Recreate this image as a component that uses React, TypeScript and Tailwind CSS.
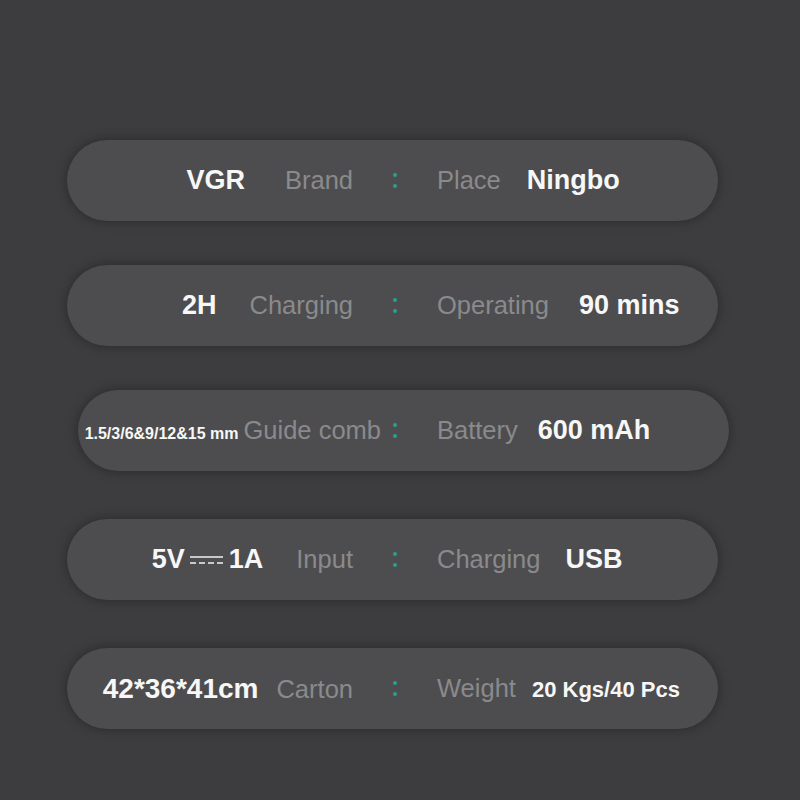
import React from 'react';

// 规格表：每行一个胶囊，左值+左标签 · 冒号 · 右标签+右值

function DcSymbol() {
  return (
    <svg width="34" height="12" viewBox="0 0 34 12" className="mx-[5px] self-center">
      <line x1="0" y1="3" x2="33" y2="3" stroke="#f2f2f2" strokeWidth="1.6" />
      <line x1="0" y1="9" x2="33" y2="9" stroke="#f2f2f2" strokeWidth="1.4" strokeDasharray="6 3" />
    </svg>
  );
}

function Colon({ className }: { className: string }) {
  return (
    <div className={`flex h-full items-center ${className}`}>
      <div className="flex flex-col gap-[7px]">
        <span className="block h-[4px] w-[4px] rounded-full bg-[#2a9f8e]" />
        <span className="block h-[4px] w-[4px] rounded-full bg-[#2a9f8e]" />
      </div>
    </div>
  );
}

const pill =
  'flex h-[81px] w-[651px] items-center rounded-full bg-[#4d4d4f] shadow-[0_0_12px_rgba(0,0,0,0.35)]';
const value = 'font-bold text-[27px] leading-none text-[#f7f7f7]';
const label = 'text-[25.5px] leading-none text-[#8a8a8c]';

export default function App() {
  return (
    <div
      className="flex h-[800px] w-[800px] flex-col bg-[#3d3d3f]"
      style={{ fontFamily: '"Liberation Sans", Arial, sans-serif' }}
    >
      {/* VGR / Ningbo */}
      <div className={`${pill} ml-[67px] mt-[140px]`}>
        <div className="flex w-[286px] items-baseline justify-end gap-[40px]">
          <span className={value}>VGR</span>
          <span className={label}>Brand</span>
        </div>
        <Colon className="w-[84px] pl-[40px]" />
        <div className="flex items-baseline gap-[26px]">
          <span className={label}>Place</span>
          <span className={value}>Ningbo</span>
        </div>
      </div>

      {/* 充电 / 运行 */}
      <div className={`${pill} ml-[67px] mt-[44px]`}>
        <div className="flex w-[286px] items-baseline justify-end gap-[33px]">
          <span className={value}>2H</span>
          <span className={label}>Charging</span>
        </div>
        <Colon className="w-[84px] pl-[40px]" />
        <div className="flex items-baseline gap-[30px]">
          <span className={label}>Operating</span>
          <span className={value}>90 mins</span>
        </div>
      </div>

      {/* 限位梳 / 电池 */}
      <div className={`${pill} ml-[78px] mt-[44px]`}>
        <div className="flex w-[303px] items-baseline justify-end gap-[5px]">
          <span className="font-bold text-[16px] leading-none text-[#f7f7f7]">1.5/3/6&amp;9/12&amp;15 mm</span>
          <span className={label}>Guide comb</span>
        </div>
        <Colon className="w-[56px] pl-[12px]" />
        <div className="flex items-baseline gap-[20px]">
          <span className={label}>Battery</span>
          <span className={value}>600 mAh</span>
        </div>
      </div>

      {/* 输入 / USB */}
      <div className={`${pill} ml-[67px] mt-[48px]`}>
        <div className="flex w-[286px] items-baseline justify-end gap-[33px]">
          <span className={`${value} flex items-baseline`}>
            5V
            <DcSymbol />
            1A
          </span>
          <span className={label}>Input</span>
        </div>
        <Colon className="w-[84px] pl-[40px]" />
        <div className="flex items-baseline gap-[25px]">
          <span className={label}>Charging</span>
          <span className={value}>USB</span>
        </div>
      </div>

      {/* 外箱 / 重量 */}
      <div className={`${pill} ml-[67px] mt-[48px]`}>
        <div className="flex w-[286px] items-baseline justify-end gap-[18px]">
          <span className="font-bold text-[28px] leading-none text-[#f7f7f7]">42*36*41cm</span>
          <span className={label}>Carton</span>
        </div>
        <Colon className="w-[84px] pl-[40px]" />
        <div className="flex items-baseline gap-[16px]">
          <span className={label}>Weight</span>
          <span className="font-bold text-[22px] leading-none text-[#f7f7f7]">20 Kgs/40 Pcs</span>
        </div>
      </div>
    </div>
  );
}
